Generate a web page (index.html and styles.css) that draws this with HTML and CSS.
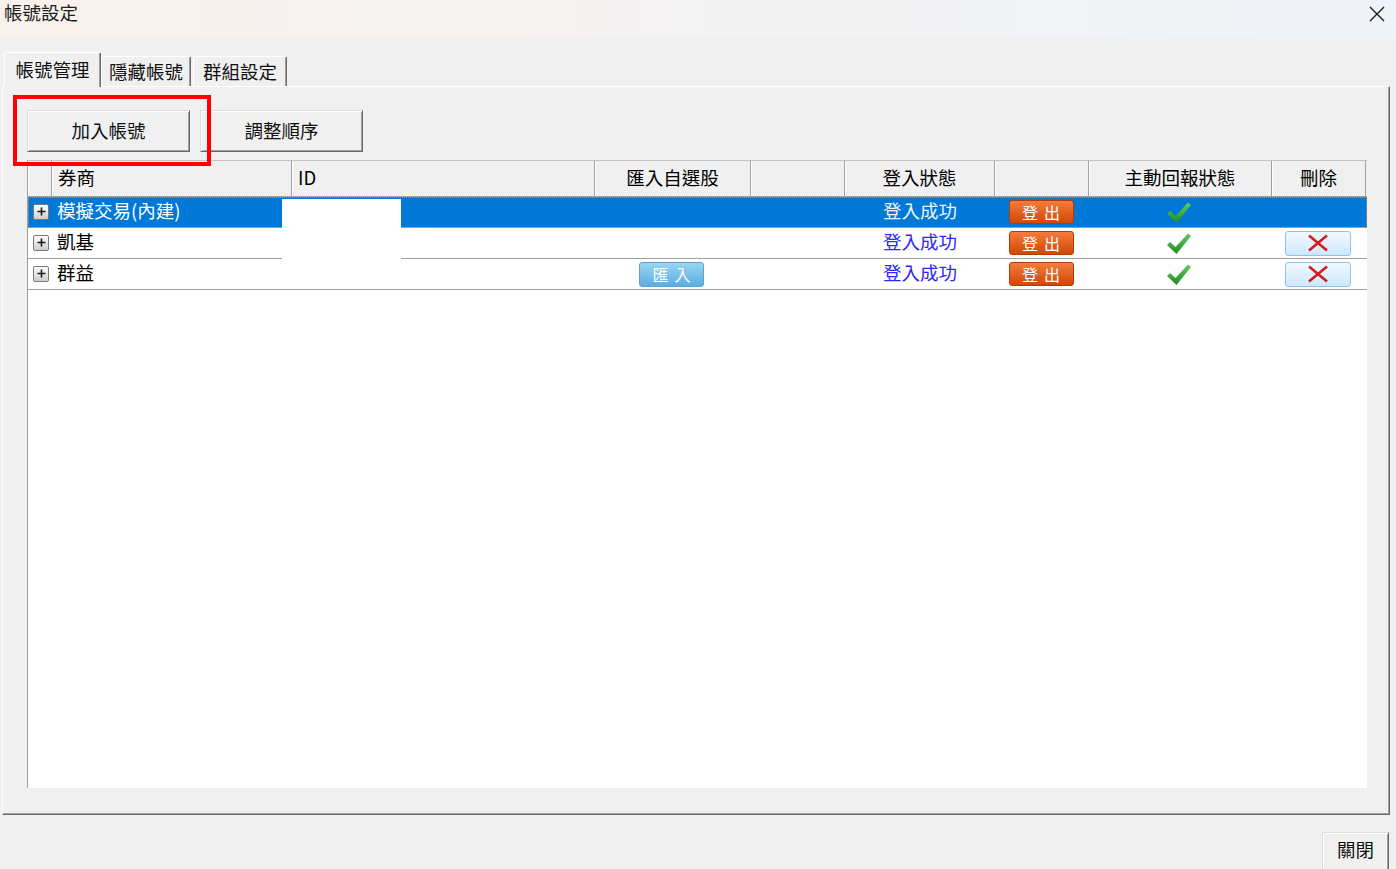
FILE: index.html
```html
<!DOCTYPE html>
<html lang="zh-Hant">
<head>
<meta charset="utf-8">
<title>帳號設定</title>
<link rel="stylesheet" href="styles.css">
</head>
<body>
<div class="window">
  <header class="titlebar">
    <span class="title">帳號設定</span>
    <span class="close-x"><svg width="16" height="16" viewBox="0 0 16 16"><path d="M1 1L15 15M15 1L1 15" stroke="#1e1e1e" stroke-width="1.4" fill="none"/></svg></span>
  </header>
  <nav class="tabs">
    <div class="tab active">帳號管理</div>
    <div class="tab second">隱藏帳號</div>
    <div class="tab third">群組設定</div>
  </nav>
  <section class="panel">
    <div class="toolbar">
      <button class="btn btn-wide">加入帳號</button>
      <button class="btn btn-wide">調整順序</button>
    </div>
    <div class="grid">
      <div class="row head">
        <div class="cell"></div>
        <div class="cell left">券商</div>
        <div class="cell left">ID</div>
        <div class="cell">匯入自選股</div>
        <div class="cell"></div>
        <div class="cell">登入狀態</div>
        <div class="cell"></div>
        <div class="cell">主動回報狀態</div>
        <div class="cell">刪除</div>
      </div>
      <div class="row data selected">
        <div class="cell rh"><span class="exp"><svg width="9" height="9" viewBox="0 0 9 9"><path d="M0.5 4.5h8M4.5 0.5v8" stroke="#1a1a1a" stroke-width="1.6"/></svg></span></div>
        <div class="cell left name">模擬交易(內建)</div>
        <div class="cell left"></div>
        <div class="cell"></div>
        <div class="cell"></div>
        <div class="cell status">登入成功</div>
        <div class="cell"><span class="logout">登出</span></div>
        <div class="cell"><svg class="check" width="24" height="21" viewBox="0 0 24 21"><defs><linearGradient id="ck1" x1="0" y1="0" x2="0" y2="1"><stop offset="0" stop-color="#5fd05f"/><stop offset="1" stop-color="#1f8a1f"/></linearGradient></defs><polygon points="0,12 3,9 8.5,14 21,0.5 24,3 9.5,21" fill="url(#ck1)"/></svg></div>
        <div class="cell"></div>
      </div>
      <div class="row data">
        <div class="cell rh"><span class="exp"><svg width="9" height="9" viewBox="0 0 9 9"><path d="M0.5 4.5h8M4.5 0.5v8" stroke="#1a1a1a" stroke-width="1.6"/></svg></span></div>
        <div class="cell left name">凱基</div>
        <div class="cell left"></div>
        <div class="cell"></div>
        <div class="cell"></div>
        <div class="cell status">登入成功</div>
        <div class="cell"><span class="logout">登出</span></div>
        <div class="cell"><svg class="check" width="24" height="21" viewBox="0 0 24 21"><defs><linearGradient id="ck2" x1="0" y1="0" x2="0" y2="1"><stop offset="0" stop-color="#5fd05f"/><stop offset="1" stop-color="#1f8a1f"/></linearGradient></defs><polygon points="0,12 3,9 8.5,14 21,0.5 24,3 9.5,21" fill="url(#ck2)"/></svg></div>
        <div class="cell"><span class="del"><svg width="22" height="18" viewBox="0 0 22 18"><path d="M2 1.5L20 16.5M20 1.5L2 16.5" stroke="#d41c1c" stroke-width="2.6" fill="none"/></svg></span></div>
      </div>
      <div class="row data">
        <div class="cell rh"><span class="exp"><svg width="9" height="9" viewBox="0 0 9 9"><path d="M0.5 4.5h8M4.5 0.5v8" stroke="#1a1a1a" stroke-width="1.6"/></svg></span></div>
        <div class="cell left name">群益</div>
        <div class="cell left"></div>
        <div class="cell"><span class="import">匯入</span></div>
        <div class="cell"></div>
        <div class="cell status">登入成功</div>
        <div class="cell"><span class="logout">登出</span></div>
        <div class="cell"><svg class="check" width="24" height="21" viewBox="0 0 24 21"><defs><linearGradient id="ck3" x1="0" y1="0" x2="0" y2="1"><stop offset="0" stop-color="#5fd05f"/><stop offset="1" stop-color="#1f8a1f"/></linearGradient></defs><polygon points="0,12 3,9 8.5,14 21,0.5 24,3 9.5,21" fill="url(#ck3)"/></svg></div>
        <div class="cell"><span class="del"><svg width="22" height="18" viewBox="0 0 22 18"><path d="M2 1.5L20 16.5M20 1.5L2 16.5" stroke="#d41c1c" stroke-width="2.6" fill="none"/></svg></span></div>
      </div>
      <div class="redact"></div>
    </div>
    <div class="highlight"></div>
  </section>
  <footer class="footer">
    <button class="btn btn-close">關閉</button>
  </footer>
</div>
</body>
</html>
```

FILE: styles.css
```css
* { box-sizing: border-box; }

body {
  margin: 0;
  background: #f0f0f0;
  font-family: "Noto Sans CJK TC", "Noto Sans", sans-serif;
  font-size: 18.5px;
  color: #000;
}

.window {
  width: 1396px;
  height: 869px;
  overflow: hidden;
  display: flex;
  flex-direction: column;
}

.titlebar {
  height: 38px;
  flex: none;
  display: flex;
  justify-content: space-between;
  align-items: flex-start;
  padding: 0 11px 0 4px;
  background: linear-gradient(to right, #f9f1ec, #eef3f8);
}

.title {
  line-height: 26px;
  margin-top: -1px;
  color: #202020;
}

.close-x {
  margin-top: 6px;
  width: 16px;
  height: 16px;
  display: flex;
}

.tabs {
  height: 48px;
  flex: none;
  display: flex;
  align-items: flex-end;
  padding-left: 4px;
  position: relative;
  z-index: 2;
}

.tab {
  height: 30px;
  display: flex;
  align-items: center;
  justify-content: center;
  padding-bottom: 2px;
  background: #f0f0f0;
  border-top: 1px solid #fff;
  border-left: 1px solid #fff;
  border-right: 1px solid #696969;
  box-shadow: inset -1px 0 #a0a0a0;
  border-radius: 2px 2px 0 0;
  color: #111;
}

.tab.active {
  width: 97px;
  height: 35px;
  margin-bottom: -1px;
  padding-bottom: 3px;
}

.tab.second { width: 90px; }
.tab.third { width: 94px; margin-left: 2px; }

.panel {
  position: relative;
  flex: none;
  width: 1388px;
  height: 729px;
  margin-left: 2px;
  padding: 23px 0 0 24px;
  border-top: 1px solid #fff;
  border-left: 1px solid #fff;
  border-right: 1px solid #696969;
  border-bottom: 1px solid #696969;
  box-shadow: inset -1px -1px #a0a0a0;
}

.toolbar {
  display: flex;
  gap: 10px;
}

.btn {
  font: inherit;
  color: #111;
  background: #f0f0f0;
  border: 1px solid;
  border-color: #dcdcdc #696969 #696969 #dcdcdc;
  box-shadow: inset 1px 1px #fff, inset -1px -1px #a0a0a0;
  padding: 0;
}

.btn-wide {
  width: 163px;
  height: 42px;
  padding-bottom: 3px;
}

.grid {
  position: relative;
  margin-top: 8px;
  width: 1340px;
  height: 628px;
  background: #fff;
  border-left: 1px solid #a0a0a0;
}

.row {
  display: grid;
  grid-template-columns: 24px 240px 303px 156px 94px 150px 94px 183px 94px;
}

.row.head {
  height: 37px;
  background: #f0f0f0;
  border-top: 1px solid #c4c4c4;
  border-bottom: 1px solid #a0a0a0;
}

.row.head .cell {
  border-right: 1px solid #a0a0a0;
  box-shadow: inset 1px 0 #fff;
  padding-bottom: 4px;
}

.cell {
  display: flex;
  align-items: center;
  justify-content: center;
  white-space: nowrap;
}

.cell.left {
  justify-content: flex-start;
  padding-left: 6px;
}

.row.data {
  height: 31px;
  border-bottom: 1px solid #a0a0a0;
}

.row.data .cell.name,
.row.data .cell.status { padding-bottom: 4px; }

.row.data .cell.name { padding-left: 5px; }

.cell.rh {
  justify-content: flex-start;
  padding-left: 5px;
  padding-bottom: 1px;
}

.exp {
  width: 16px;
  height: 16px;
  border: 1px solid #7a7a7a;
  border-radius: 2px;
  background: linear-gradient(#ffffff, #cdcdcd);
  display: flex;
  align-items: center;
  justify-content: center;
}

.row.selected {
  background: #0078d7;
  color: #fff;
  outline: 1px dotted #d88a3a;
  outline-offset: -1px;
}

.status { color: #2b28ff; }
.row.selected .status { color: #eef4ff; }

.logout {
  width: 65px;
  height: 24px;
  border-radius: 3px;
  border: 1px solid #b53a00;
  background: linear-gradient(#f47c3c, #d04806);
  color: #fff;
  font-size: 16px;
  letter-spacing: 6px;
  padding-left: 6px;
  padding-bottom: 1px;
  display: flex;
  align-items: center;
  justify-content: center;
  margin-left: -2px;
}

.import {
  width: 65px;
  height: 25px;
  border-radius: 3px;
  border: 1px solid #5aa5d5;
  background: linear-gradient(#9ad4f4, #5caedf);
  color: #fff;
  font-size: 16px;
  letter-spacing: 6px;
  padding-left: 6px;
  padding-bottom: 1px;
  display: flex;
  align-items: center;
  justify-content: center;
  margin-left: -3px;
}

.del {
  width: 66px;
  height: 25px;
  border-radius: 3px;
  border: 1px solid #8ec5ea;
  background: linear-gradient(#f0f9ff, #cde8fb);
  display: flex;
  align-items: center;
  justify-content: center;
  margin-left: -2px;
}

.check { margin-left: -4px; }

.redact {
  position: absolute;
  left: 254px;
  top: 39px;
  width: 119px;
  height: 61px;
  background: #fff;
}

.highlight {
  position: absolute;
  left: 10px;
  top: 8px;
  width: 198px;
  height: 71px;
  border: 4px solid #ff0000;
}

.footer {
  flex: 1;
  display: flex;
  justify-content: flex-end;
  padding: 17px 7px 0 0;
}

.btn-close {
  width: 67px;
  height: 42px;
  padding-bottom: 9px;
}
```
